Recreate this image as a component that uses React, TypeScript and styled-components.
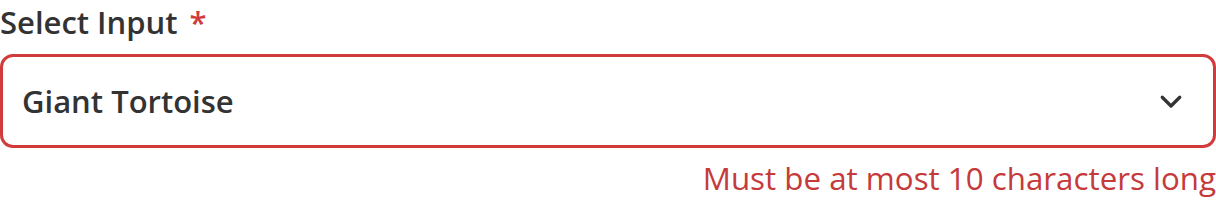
import styled, { createGlobalStyle } from 'styled-components';

const GlobalStyle = createGlobalStyle`
  body {
    margin: 0;
    background: #ffffff;
    font-family: 'Open Sans', 'Noto Sans', sans-serif;
  }
`;

const Field = styled.div`
  width: 1216px;
  display: flex;
  flex-direction: column;
`;

const Label = styled.label`
  font-size: 31px;
  font-weight: 600;
  line-height: 44px;
  color: #333333;
  margin-bottom: 10px;
`;

const Required = styled.span`
  color: #d13b3b;
  margin-left: 12px;
`;

const SelectBox = styled.div<{ invalid: boolean }>`
  box-sizing: border-box;
  height: 94px;
  display: flex;
  align-items: center;
  justify-content: space-between;
  padding: 0 27px 0 19px;
  border: 3px solid ${({ invalid }) => (invalid ? '#d13b3b' : '#cccccc')};
  border-radius: 13px;
  background: #ffffff;
`;

const Value = styled.span`
  font-size: 31px;
  font-weight: 600;
  color: #333333;
`;

const Chevron = styled.svg`
  width: 30px;
  height: 30px;
  color: #333333;
`;

const ErrorText = styled.div`
  align-self: flex-end;
  font-size: 31.3px;
  font-weight: 400;
  line-height: 44px;
  margin-top: 8px;
  color: #c53a3a;
`;

const App = () => {
  const value = 'Giant Tortoise';
  const invalid = value.length > 10;
  return (
    <>
      <GlobalStyle />
      <Field>
        <Label>
          Select Input<Required>*</Required>
        </Label>
        <SelectBox invalid={invalid}>
          <Value>{value}</Value>
          <Chevron viewBox="0 0 24 24" fill="none" stroke="currentColor" strokeWidth="2.6" strokeLinecap="round" strokeLinejoin="round">
            <path d="M5 9l7 7 7-7" />
          </Chevron>
        </SelectBox>
        {invalid ? <ErrorText>Must be at most 10 characters long</ErrorText> : null}
      </Field>
    </>
  );
};

export default App;
